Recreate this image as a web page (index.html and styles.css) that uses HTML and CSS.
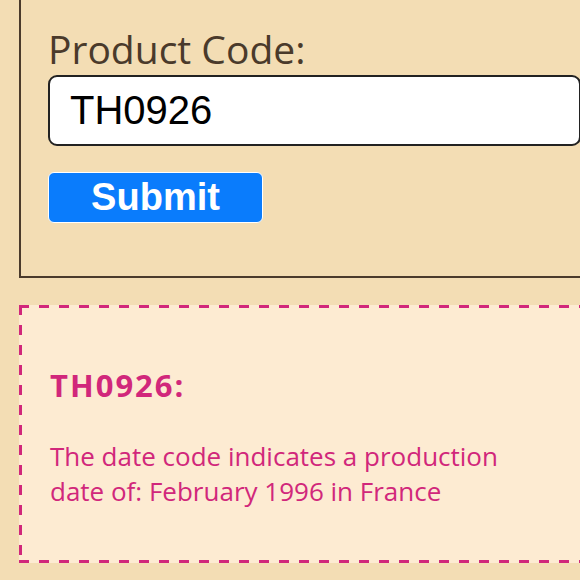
FILE: index.html
```html
<!DOCTYPE html>
<html>
<head>
<meta charset="utf-8">
<link rel="stylesheet" href="styles.css">
</head>
<body>
<div class="page">
  <form class="lookup">
    <label class="label" for="code">Product Code:</label>
    <input class="field" id="code" type="text" value="TH0926">
    <button class="submit" type="button">Submit</button>
  </form>
  <section class="result">
    <h2 class="result-title">TH0926:</h2>
    <p class="result-text">The date code indicates a production<br>date of: February 1996 in France</p>
  </section>
</div>
</body>
</html>
```

FILE: styles.css
```css
html, body {
  margin: 0;
  padding: 0;
  background: #f3ddb4;
  overflow: hidden;
}
.page {
  width: 640px;
  padding: 0 0 0 19px;
  display: flex;
  flex-direction: column;
  gap: 27px;
}
.lookup {
  display: flex;
  flex-direction: column;
  align-items: flex-start;
  border: 2px solid #4a3a2b;
  border-top: 0;
  padding: 24px 27px 53px 27px;
  background: #f3ddb4;
}
.label {
  font-family: "Open Sans", Lato, sans-serif;
  font-size: 39px;
  line-height: 50px;
  color: #4a3a2b;
}
.field {
  box-sizing: border-box;
  width: 533px;
  height: 71px;
  margin: 1px 0 0 0;
  padding: 0 20px;
  border: 2px solid #222;
  border-radius: 9px;
  background: #fff;
  font-family: "Liberation Sans", Arial, sans-serif;
  font-size: 40px;
  color: #000;
  outline: none;
}
.submit {
  box-sizing: border-box;
  margin-top: 26px;
  width: 215px;
  height: 51px;
  border: 1px solid #fff;
  border-radius: 6px;
  background: #0a7cfc;
  color: #fff;
  font-family: "Liberation Sans", Arial, sans-serif;
  font-weight: bold;
  font-size: 38px;
  line-height: 47px;
  padding: 0;
}
.result {
  padding: 60px 28px 54px 31px;
  background-color: #fdebd2;
  background-image:
    repeating-linear-gradient(90deg, #d1277b 0 10px, transparent 10px 20px),
    repeating-linear-gradient(90deg, #d1277b 0 10px, transparent 10px 20px),
    repeating-linear-gradient(180deg, #d1277b 0 10px, transparent 10px 20px);
  background-size: 100% 3px, 100% 3px, 3px 100%;
  background-position: 0 0, 0 100%, 0 0;
  background-repeat: no-repeat;
  color: #d1277b;
  font-family: "Open Sans", Lato, sans-serif;
}
.result-title {
  margin: 0;
  font-size: 31px;
  line-height: 40px;
  font-weight: bold;
  letter-spacing: 2px;
}
.result-text {
  margin: 34px 0 0 0;
  font-size: 26px;
  line-height: 35px;
}
```
